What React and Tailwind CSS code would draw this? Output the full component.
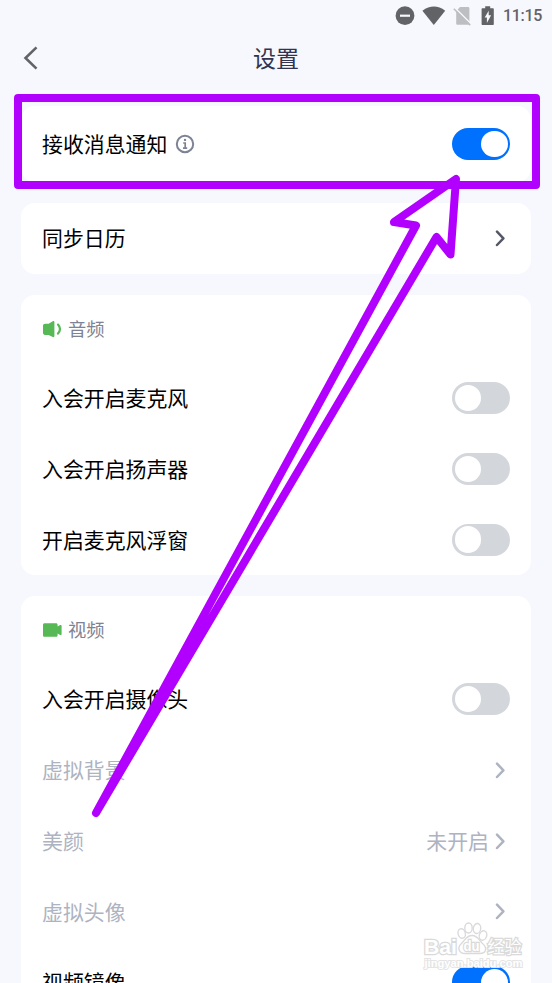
import { useState } from 'react';
import clsx from 'clsx';

function Toggle({ defaultOn = false }) {
  const [on, setOn] = useState(defaultOn);

  return (
    <button
      role="switch"
      aria-checked={on}
      onClick={() => setOn(!on)}
      className={clsx('flex h-8 w-[58px] shrink-0 items-center rounded-full px-[2.5px]', on ? 'justify-end bg-[#0070ff]' : 'justify-start bg-[#d3d6db]')}
    >
      <span className="size-[26.5px] rounded-full bg-white" />
    </button>
  );
}

function Chevron({ className }) {
  return (
    <svg viewBox="0 0 10 18" className={clsx('mr-[5px] h-[18px] w-[10px]', className)} fill="none" stroke="currentColor" strokeWidth="2.5" strokeLinecap="round" strokeLinejoin="round">
      <path d="M2 2.6 8.4 9.3 2 16" />
    </svg>
  );
}

function Row({ label, info, value, disabled, children }) {
  return (
    <div className={clsx('flex h-[70.8px] items-center justify-between text-[20.9px] leading-none', disabled ? 'text-[#adb3c1]' : 'text-black')}>
      <div className="flex items-center gap-[7.5px]">
        <span className="pb-px">{label}</span>
        {info}
      </div>
      <div className="flex items-center gap-[6px]">
        {value && <span className="pb-px">{value}</span>}
        {children}
      </div>
    </div>
  );
}

function Card({ className, children }) {
  return <section className={clsx('rounded-[14px] bg-white px-[21px]', className)}>{children}</section>;
}

function SectionTitle({ icon, children }) {
  return (
    <h2 className="flex h-[67.6px] items-center gap-[6px] text-[18.3px] leading-none text-[#7d8394]">
      {icon}
      <span className="pb-px">{children}</span>
    </h2>
  );
}

function InfoIcon() {
  return (
    <svg viewBox="0 0 20 20" className="size-5" fill="none" stroke="#7d8394" strokeWidth="2">
      <circle cx="10" cy="10" r="8.2" />
      <path d="M8.2 9h2v5M8 14.1h4.2" strokeWidth="1.7" />
      <circle cx="10" cy="5.9" r="1.2" fill="#7d8394" stroke="none" />
    </svg>
  );
}

function SpeakerIcon() {
  return (
    <svg viewBox="0 0 20 18" className="h-[18px] w-5" fill="#57b956">
      <path d="M3 3.7h3.6l4.2-2.5c.8-.5 1.6 0 1.6.9v14c0 .9-.8 1.4-1.6.9l-4.2-2H3c-1.1 0-2-.8-2-1.9V5.6c0-1.1.9-1.9 2-1.9Z" />
      <path d="M16 4.6q4 4.500 0 9" fill="none" stroke="#57b956" strokeWidth="2.2" strokeLinecap="round" />
    </svg>
  );
}

function CameraIcon() {
  return (
    <svg viewBox="0 0 20 18" className="h-[18px] w-5" fill="#57b956">
      <path d="M2.6 2.3h11.4c1 0 1.6.7 1.6 1.6v1.5l2.5-1.3c.7-.4 1.500 0 1.500.8v8.200c0 .8-.8 1.200-1.500.8l-2.500-1.300v1.600c0 1-.7 1.600-1.600 1.600H2.600c-1 0-1.600-.7-1.600-1.600V3.900c0-1 .7-1.600 1.600-1.600Z" />
    </svg>
  );
}

function StatusBar() {
  return (
    <div className="flex h-8 items-center justify-end pr-[10px] text-[#626366]">
      <svg viewBox="0 0 20 20" className="size-5">
        <circle cx="10" cy="9.7" r="9.4" fill="currentColor" />
        <path d="M5 9.7h10" stroke="#f6f8fd" strokeWidth="2.2" />
      </svg>
      <svg viewBox="0 0 24 20" className="ml-[7px] h-5 w-6" fill="currentColor">
        <path d="M.4 4.7Q12-3.6 23.2 4.7L11.8 19Z" />
      </svg>
      <svg viewBox="0 0 18 20" className="ml-[7px] h-5 w-[18px]">
        <path d="M7 1h8c.8 0 1.4.6 1.4 1.4v15c0 .8-.6 1.4-1.4 1.4H4.6c-.8 0-1.4-.6-1.4-1.4V5Z" fill="#bdbec1" />
        <path d="m1.8 1.8 16 16" stroke="#f6f8fd" strokeWidth="1.6" />
        <path d="m.8 2.7 16.400 16.400" stroke="#bdbec1" strokeWidth="1.600" />
      </svg>
      <svg viewBox="0 0 14 20" className="ml-[10px] h-5 w-[14px]" fill="currentColor">
        <path d="M4.2.2h5v2h2.600c.6 0 1 .4 1 1v14.900c0 .6-.4 1-1 1H1.600c-.6 0-1-.4-1-1V3.200c0-.6.4-1 1-1h2.600Z" />
        <path d="M7.7 4.8v4.5h2.4L5.900 17v-5.600H3.700Z" fill="#f6f8fd" />
      </svg>
      <span className="ml-[8px] font-[Roboto] text-[16px] leading-none font-medium tracking-[-0.3px]">11:15</span>
    </div>
  );
}

function Watermark() {
  return (
    <div className="pointer-events-none absolute top-[922px] left-[422px]">
      <svg viewBox="0 0 105 50" className="h-[50px] w-[105px]" fill="#fff" stroke="#dadada" strokeWidth="1.4">
        <g fontFamily="Liberation Sans, sans-serif" strokeWidth="2.6" paintOrder="stroke">
          <text x="2" y="31.500" fontSize="21" fontWeight="bold" textLength="33" lengthAdjust="spacingAndGlyphs">Bai</text>
          <text x="65.5" y="30.5" fontSize="17" fontFamily="Noto Sans CJK SC, sans-serif">经验</text>
        </g>
        <ellipse cx="39.7" cy="11.5" rx="3.6" ry="4.8" transform="rotate(-15 39.7 11.5)" />
        <ellipse cx="46.5" cy="6" rx="3.7" ry="5" />
        <ellipse cx="55" cy="6.5" rx="3.7" ry="5" transform="rotate(8 55 6.5)" />
        <ellipse cx="61" cy="13.5" rx="3.7" ry="4.8" transform="rotate(18 61 13.5)" />
        <path d="M50 13.5c6 0 7 5 11 8.500 4.500 4 3 9.500-3 9.500H43c-6 0-8-5.500-4-9.500 4-3.500 5-8.500 11-8.500Z" />
        <g fontFamily="Liberation Sans, sans-serif" fontWeight="bold" paintOrder="stroke">
          <text x="41.5" y="29" fontSize="14" strokeWidth="2.4" textLength="16" lengthAdjust="spacingAndGlyphs">du</text>
          <text x="2.5" y="45" fontSize="10" stroke="#e4e4e4" strokeWidth="1.8" textLength="98" lengthAdjust="spacingAndGlyphs">jingyan.baidu.com</text>
        </g>
      </svg>
    </div>
  );
}

export default function App() {
  return (
    <main className="relative h-[983px] w-[552px] overflow-hidden bg-[#f6f8fd] font-['Noto_Sans_CJK_SC',sans-serif]">
      <StatusBar />
      <header className="grid h-[52px] grid-cols-[1fr_auto_1fr] items-center px-[22px]">
        <button aria-label="返回" className="pb-px">
          <svg viewBox="0 0 18 24" className="h-6 w-[18px]" fill="none" stroke="#626366" strokeWidth="2.6">
            <path d="M14.5 1.4 3.5 12l11 10.6" />
          </svg>
        </button>
        <h1 className="pb-[2px] text-[23px] leading-none text-[#32344f]">设置</h1>
      </header>

      <div className="mt-[22px] flex flex-col gap-[21px] px-[21px]">
        <Card className="py-[2.5px]">
          <Row label="接收消息通知" info={<InfoIcon />}>
            <Toggle defaultOn />
          </Row>
        </Card>
        <Card className="pb-[0.5px]">
          <Row label="同步日历">
            <Chevron className="text-[#545866]" />
          </Row>
        </Card>
        <Card>
          <SectionTitle icon={<SpeakerIcon />}>音频</SectionTitle>
          <Row label="入会开启麦克风"><Toggle /></Row>
          <Row label="入会开启扬声器"><Toggle /></Row>
          <Row label="开启麦克风浮窗"><Toggle /></Row>
        </Card>
        <Card>
          <SectionTitle icon={<CameraIcon />}>视频</SectionTitle>
          <Row label="入会开启摄像头"><Toggle /></Row>
          <Row label="虚拟背景" disabled><Chevron /></Row>
          <Row label="美颜" value="未开启" disabled><Chevron /></Row>
          <Row label="虚拟头像" disabled><Chevron /></Row>
          <Row label="视频镜像"><Toggle defaultOn /></Row>
        </Card>
      </div>

      <Watermark />

      {/* highlight frame and pointer over the notification switch */}
      <div className="pointer-events-none absolute top-[94px] left-[14px] h-[95px] w-[526px] rounded-[4px] border-8 border-[#b200ff]" />
      <svg viewBox="0 0 552 983" className="pointer-events-none absolute inset-0 h-[983px] w-[552px]" fill="none" stroke="#b200ff" strokeWidth="8" strokeLinejoin="round" strokeLinecap="round">
        <path d="M96 813 416 225.5 394 222 456 179 450.5 254.5 436.5 237Z" />
      </svg>
    </main>
  );
}
